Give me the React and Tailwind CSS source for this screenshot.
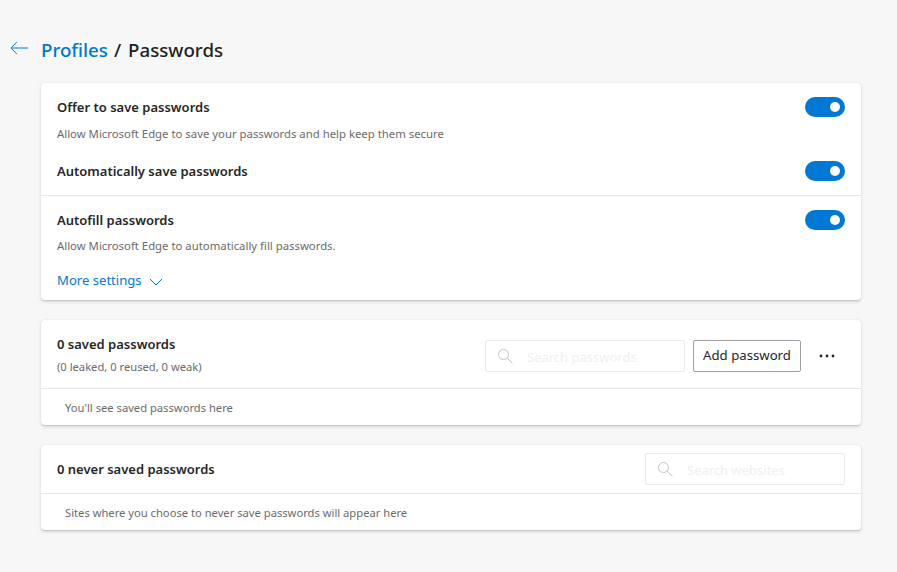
const font = { fontFamily: '"Noto Sans", "Open Sans", sans-serif' };

function Toggle() {
  return (
    <div className="flex h-5 w-10 items-center justify-end rounded-full bg-[#0078d4] pr-[5px]">
      <div className="h-2.5 w-2.5 rounded-full bg-white" />
    </div>
  );
}

function Label({ children }) {
  return <span className="mt-[2px] text-[13px] font-semibold text-[#262626]">{children}</span>;
}

function SearchBox({ placeholder }) {
  return (
    <div className="flex h-8 w-[200px] items-center rounded-[2px] border border-[#ebebeb] bg-white pl-[11px]">
      <svg width="16" height="16" viewBox="0 0 16 16" fill="none" stroke="#c4c4c4" strokeWidth="1">
        <circle cx="6.5" cy="6.5" r="5" />
        <path d="M10.2 10.2 15.5 15.5" />
      </svg>
      <span className="ml-[14px] mt-[3px] text-[13px] text-[#f0f0f0]">{placeholder}</span>
    </div>
  );
}

function Card({ children }) {
  return (
    <div className="rounded-[4px] bg-white shadow-[0_1.6px_3.6px_rgba(0,0,0,0.13),0_0.3px_0.9px_rgba(0,0,0,0.11)]">
      {children}
    </div>
  );
}

export default function App() {
  return (
    <div style={font} className="h-[572px] w-[897px] overflow-hidden bg-[#f7f7f7] text-[#262626]">
      <div className="flex h-[83px] items-start pt-[36px]">
        <svg className="ml-[10px] mt-[5px]" width="18" height="14" viewBox="0 0 18 14" fill="none" stroke="#0078d4" strokeWidth="1">
          <path d="M7 .8 1 7l6 6.2M1 7h17" />
        </svg>
        <div className="ml-[13px] flex text-[18.7px] font-medium leading-[28px] text-[#1f1f1f]">
          <span className="text-[#0078d4]">Profiles</span>
          <span className="ml-[6px]">/</span>
          <span className="ml-[7px]">Passwords</span>
        </div>
      </div>
      <div className="ml-[41px] flex w-[820px] flex-col gap-5">
        <Card>
          <div className="h-[112px] px-4 pt-[14px]">
            <div className="flex h-5 items-center justify-between">
              <Label>Offer to save passwords</Label>
              <Toggle />
            </div>
            <div className="mt-[7px] text-[11.35px] leading-[20px] text-[#6b6b6b]">Allow Microsoft Edge to save your passwords and help keep them secure</div>
            <div className="mt-[17px] flex h-5 items-center justify-between">
              <Label>Automatically save passwords</Label>
              <Toggle />
            </div>
          </div>
          <div className="h-[105px] border-t border-[#e6e6e6] px-4 pt-[14px]">
            <div className="flex h-5 items-center justify-between">
              <Label>Autofill passwords</Label>
              <Toggle />
            </div>
            <div className="mt-[6px] text-[11.35px] leading-[20px] text-[#6b6b6b]">Allow Microsoft Edge to automatically fill passwords.</div>
            <div className="mt-[15px] flex h-5 items-center text-[13.1px] text-[#0078d4]">
              <span>More settings</span>
              <svg className="ml-[7px] mt-[2px]" width="14" height="8" viewBox="0 0 14 8" fill="none" stroke="#0078d4" strokeWidth="1">
                <path d="M1 1l6 6 6-6" />
              </svg>
            </div>
          </div>
        </Card>
        <Card>
          <div className="flex h-[68px] items-center justify-between pl-4 pr-[16px]">
            <div className="mt-[2px]">
              <div className="text-[13px] font-semibold leading-[20px]">0 saved passwords</div>
              <div className="mt-[4px] text-[11.2px] leading-[18px] text-[#6b6b6b]">(0 leaked, 0 reused, 0 weak)</div>
            </div>
            <div className="mt-1 flex items-center">
              <SearchBox placeholder="Search passwords" />
              <div className="ml-2 flex h-8 w-[108px] items-center justify-center rounded-[2px] border border-[#a0a0a0] text-[13.2px]">Add password</div>
              <svg className="ml-[18px] mr-[10px]" width="16" height="4" viewBox="0 0 16 4" fill="#262626">
                <circle cx="2" cy="2" r="1.4" />
                <circle cx="8" cy="2" r="1.4" />
                <circle cx="14" cy="2" r="1.4" />
              </svg>
            </div>
          </div>
          <div className="flex h-[37px] items-center border-t border-[#e6e6e6] pl-6 pt-[2px] text-[11.2px] text-[#6b6b6b]">You'll see saved passwords here</div>
        </Card>
        <Card>
          <div className="flex h-[48px] items-center justify-between pl-4 pr-4">
            <Label>0 never saved passwords</Label>
            <SearchBox placeholder="Search websites" />
          </div>
          <div className="flex h-[37px] items-center border-t border-[#e6e6e6] pl-6 pt-[2px] text-[11.2px] text-[#6b6b6b]">Sites where you choose to never save passwords will appear here</div>
        </Card>
      </div>
    </div>
  );
}
